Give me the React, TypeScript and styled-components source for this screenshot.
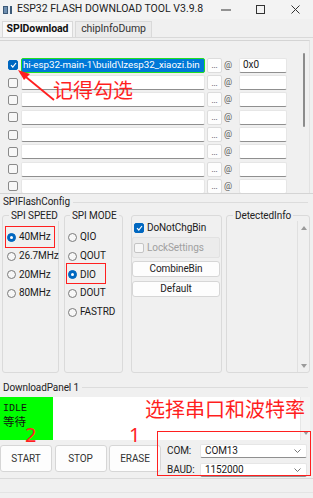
import React from 'react';
import styled, { createGlobalStyle } from 'styled-components';

const GlobalStyle = createGlobalStyle`
  html, body {
    margin: 0;
    padding: 0;
    background: #f0f0f0;
  }
  body {
    font-family: Roboto, 'Noto Sans CJK SC', sans-serif;
  }
  * {
    box-sizing: border-box;
  }
`;

const red = '#ff1f1f';

const Window = styled.div`
  position: relative;
  width: 313px;
  height: 498px;
  overflow: hidden;
  display: flex;
  flex-direction: column;
  background: #f0f0f0;
  color: #1a1a1a;
  font-size: 10px;
  letter-spacing: -0.1px;
  line-height: 1;
`;

// Title bar
//
const TitleBar = styled.div`
  height: 19px;
  flex-shrink: 0;
  display: flex;
  align-items: center;
  padding-left: 3px;
  background: #f3f3f3;
`;

const TitleText = styled.span`
  margin-left: 5px;
  font-size: 10.5px;
  color: #222;
  letter-spacing: 0;
`;

const WinControls = styled.div`
  margin-left: auto;
  display: flex;
  height: 100%;
`;

const WinButton = styled.div`
  width: 35px;
  display: flex;
  align-items: center;
  justify-content: center;
`;

// Tabs
//
const TabBar = styled.div`
  height: 19px;
  flex-shrink: 0;
  display: flex;
  align-items: flex-end;
  gap: 2px;
  padding-left: 2px;
  border-bottom: 1px solid #d9d9d9;
`;

const Tab = styled.div<{ $active?: boolean; $width: number }>`
  width: ${({ $width }) => $width}px;
  height: 16px;
  display: flex;
  align-items: center;
  justify-content: center;
  font-size: 10.5px;
  font-weight: ${({ $active }) => ($active ? 700 : 400)};
  background: ${({ $active }) => ($active ? '#f9f9f9' : '#ebebeb')};
  border: 1px solid #d9d9d9;
  border-bottom: none;
  color: ${({ $active }) => ($active ? '#111' : '#333')};
`;

// File list
//
const FilePanel = styled.div`
  margin-top: 2px;
  height: 153px;
  flex-shrink: 0;
  width: 310px;
  display: flex;
  border-top: 1px solid #d4d4d4;
  border-right: 1px solid #e2e2e2;
`;

const FileList = styled.div`
  flex: 1;
  display: flex;
  flex-direction: column;
  gap: 2.33px;
  padding: 16.7px 0 0 8px;
  overflow: hidden;
`;

const FileRow = styled.div`
  height: 15px;
  flex-shrink: 0;
  display: flex;
  align-items: center;
`;

const CheckBox = styled.span<{ $checked?: boolean; $disabled?: boolean }>`
  width: 10px;
  height: 10px;
  flex-shrink: 0;
  border-radius: 2px;
  display: flex;
  align-items: center;
  justify-content: center;
  background: ${({ $checked }) => ($checked ? '#0067c0' : '#f7f7f7')};
  border: 1px solid
    ${({ $checked, $disabled }) =>
      $checked ? '#0067c0' : $disabled ? '#c4c4c4' : '#8a8a8a'};
  margin-right: 3px;
`;

const TextBox = styled.div<{ $width: number }>`
  width: ${({ $width }) => $width}px;
  height: 15px;
  flex-shrink: 0;
  background: #fff;
  border: 1px solid #e6e6e6;
  border-bottom-color: #8f8f8f;
  border-radius: 2px;
  display: flex;
  align-items: center;
  padding-left: 3px;
  overflow: hidden;
  white-space: nowrap;
`;

const SelectedPath = styled(TextBox)`
  border: 1.5px solid #22e022;
  border-bottom-color: #22e022;
  background: #0078d7;
  color: #fff;
  padding-left: 1px;
  font-size: 9.8px;
  letter-spacing: -0.05px;
`;

const DotsButton = styled.div`
  width: 15px;
  height: 15px;
  margin-left: 2px;
  flex-shrink: 0;
  background: #fdfdfd;
  border: 1px solid #dcdcdc;
  border-radius: 2px;
  font-size: 8px;
  display: flex;
  align-items: center;
  justify-content: center;
  padding-top: 2px;
  color: #333;
`;

const AtSign = styled.span`
  width: 15px;
  margin-left: 2px;
  flex-shrink: 0;
  font-size: 9px;
  color: #555;
`;

const ScrollTrack = styled.div`
  width: 8px;
  padding: 12px 0 0 2px;
`;

const ScrollThumb = styled.div`
  width: 2px;
  height: 74px;
  border-radius: 1px;
  background: #8c8c8c;
`;

// Flash config
//
const ConfigSection = styled.div`
  height: 182px;
  flex-shrink: 0;
  display: flex;
  flex-direction: column;
  border-top: 1px solid #d4d4d4;
`;

const SectionHeader = styled.div<{ $height: number }>`
  height: ${({ $height }) => $height}px;
  flex-shrink: 0;
  display: flex;
  align-items: center;
  gap: 3px;
  padding: 0 5px 0 3px;
  color: #222;
`;

const HeaderLine = styled.div`
  flex: 1;
  height: 1px;
  background: #dcdcdc;
`;

const GroupsRow = styled.div`
  height: 163px;
  display: flex;
  padding-left: 2px;
`;

const Group = styled.fieldset<{ $width: number; $gap: number; $inset?: number }>`
  width: ${({ $width }) => $width}px;
  margin: 0 0 0 ${({ $gap }) => $gap}px;
  padding: 7px 0 0 ${({ $inset }) => $inset ?? 4}px;
  border: 1px solid #dadada;
  border-radius: 3px;
  min-width: 0;
  flex-shrink: 0;
  display: flex;
  flex-direction: column;
`;

const Legend = styled.legend`
  padding: 0 2px;
  margin-left: 2px;
  line-height: 11px;
  height: 11px;
  color: #222;
  white-space: nowrap;
`;

const PlainGroup = styled.div`
  width: 91px;
  margin: 5px 0 0 8px;
  height: 158px;
  border: 1px solid #dadada;
  border-radius: 3px;
  padding: 6px 1px 0 0;
  display: flex;
  flex-direction: column;
`;

const RadioItem = styled.div`
  height: 18.7px;
  display: flex;
  align-items: center;
  color: #1a1a1a;
`;

const RadioDot = styled.span<{ $checked?: boolean }>`
  width: 9px;
  height: 9px;
  border-radius: 50%;
  margin-right: 3px;
  flex-shrink: 0;
  display: flex;
  align-items: center;
  justify-content: center;
  background: ${({ $checked }) => ($checked ? '#0067c0' : '#f7f7f7')};
  border: 1px solid ${({ $checked }) => ($checked ? '#0067c0' : '#7a7a7a')};
  &::after {
    content: '';
    width: 3px;
    height: 3px;
    border-radius: 50%;
    background: ${({ $checked }) => ($checked ? '#fff' : 'transparent')};
  }
`;

const OptionRow = styled.div`
  height: 11px;
  display: flex;
  align-items: center;
  padding-left: 2px;
`;

const LockBox = styled.div`
  height: 21px;
  margin-top: 4px;
  display: flex;
  align-items: center;
  padding-left: 1px;
  background: #ececec;
  border: 1px solid #e2e2e2;
  border-radius: 2px;
  color: #a0a0a0;
`;

const PushButton = styled.div<{ $height?: number }>`
  height: ${({ $height }) => $height ?? 16}px;
  flex-shrink: 0;
  display: flex;
  align-items: center;
  justify-content: center;
  background: #fdfdfd;
  border: 1px solid #d6d6d6;
  border-radius: 3px;
  color: #222;
`;

const InfoBody = styled.div`
  flex: 1;
  display: flex;
  margin: -7px 0 0 -3px;
`;

const InfoText = styled.div`
  flex: 1;
`;

const InfoScroll = styled.div`
  width: 12px;
  border-left: 1px solid #e0e0e0;
  display: flex;
  flex-direction: column;
  justify-content: space-between;
  align-items: center;
  padding: 5px 0 4px;
`;

const Arrow = styled.span<{ $down?: boolean }>`
  width: 0;
  height: 0;
  border-left: 3px solid transparent;
  border-right: 3px solid transparent;
  ${({ $down }) =>
    $down ? 'border-top: 4px solid #9a9a9a;' : 'border-bottom: 4px solid #9a9a9a;'}
`;

// Download panel
//
const LogArea = styled.div`
  height: 43px;
  flex-shrink: 0;
  display: flex;
  margin-right: 3px;
`;

const StatusBlock = styled.div`
  width: 53px;
  background: #00ff00;
  padding: 6px 0 0 3px;
  font-family: 'Liberation Mono', 'Noto Sans CJK SC', monospace;
  font-size: 10px;
  letter-spacing: 0;
  line-height: 12px;
  color: #111;
`;

const CjkLine = styled.div`
  font-family: 'Noto Sans CJK SC', sans-serif;
  font-size: 11.5px;
`;

const LogText = styled.div`
  flex: 1;
  background: #fff;
`;

const LogScroll = styled.div`
  width: 10px;
  background: #f4f4f4;
  border-left: 1px solid #e6e6e6;
  display: flex;
  flex-direction: column;
  justify-content: flex-end;
  align-items: center;
  padding-bottom: 5px;
`;

const Controls = styled.div`
  height: 38px;
  flex-shrink: 0;
  display: flex;
  padding-top: 4px;
`;

const ActionButtons = styled.div`
  display: flex;
  gap: 2.5px;
  padding-top: 1px;
`;

const ActionButton = styled(PushButton)`
  width: 52px;
  height: 27px;
  color: #333;
`;

const PortPanel = styled.div`
  margin-left: 6px;
  display: grid;
  grid-template-columns: 33px 107px;
  grid-auto-rows: 14px;
  row-gap: 5px;
  align-items: center;
`;

const PortLabel = styled.span`
  color: #222;
`;

const SelectBox = styled(TextBox)`
  justify-content: space-between;
  padding: 0 5px 0 4px;
  height: 14px;
  color: #1a1a1a;
`;

const StatusBar = styled.div`
  flex: 1;
  border-top: 1px solid #dadada;
  border-bottom: 1px solid #e4e4e4;
  margin-bottom: 5px;
`;

// Annotations
//
const Note = styled.span<{ $x: number; $y: number; $latin?: boolean }>`
  position: absolute;
  left: ${({ $x }) => $x}px;
  top: ${({ $y }) => $y}px;
  color: ${red};
  font-family: ${({ $latin }) =>
    $latin ? "'Noto Sans', sans-serif" : "'Noto Sans CJK SC', sans-serif"};
  font-size: 20px;
  letter-spacing: 0;
  line-height: 1;
  white-space: nowrap;
`;

const Mark = styled.div<{ $x: number; $y: number; $w: number; $h: number }>`
  position: absolute;
  left: ${({ $x }) => $x}px;
  top: ${({ $y }) => $y}px;
  width: ${({ $w }) => $w}px;
  height: ${({ $h }) => $h}px;
  border: 1.5px solid ${red};
`;

const ArrowSvg = styled.svg`
  position: absolute;
  left: 0;
  top: 0;
  pointer-events: none;
`;

const Tick = () => (
  <svg width="7" height="6" viewBox="0 0 7 6">
    <path d="M1 3.2 L2.8 5 L6 1" fill="none" stroke="#fff" strokeWidth="1.2" />
  </svg>
);

const Chevron = () => (
  <svg width="7" height="4" viewBox="0 0 7 4">
    <path d="M0.5 0.5 L3.5 3.5 L6.5 0.5" fill="none" stroke="#666" strokeWidth="0.9" />
  </svg>
);

const speeds = ['40MHz', '26.7MHz', '20MHz', '80MHz'];
const modes = ['QIO', 'QOUT', 'DIO', 'DOUT', 'FASTRD'];

export default function App() {
  return (
    <>
      <GlobalStyle />
      <Window>
        <TitleBar>
          <svg width="9" height="8" viewBox="0 0 9 8">
            <rect width="9" height="8" fill="#3d5a78" />
            <rect x="5" y="0" width="2" height="8" fill="#e8eef4" />
            <rect x="1" y="1" width="3" height="6" fill="#6f8fb0" />
          </svg>
          <TitleText>ESP32 FLASH DOWNLOAD TOOL V3.9.8</TitleText>
          <WinControls>
            <WinButton>
              <svg width="10" height="2" viewBox="0 0 10 2">
                <rect y="0.5" width="10" height="1" fill="#333" />
              </svg>
            </WinButton>
            <WinButton>
              <svg width="9" height="9" viewBox="0 0 9 9">
                <rect x="0.5" y="0.5" width="8" height="8" fill="none" stroke="#333" />
              </svg>
            </WinButton>
            <WinButton>
              <svg width="9" height="9" viewBox="0 0 9 9">
                <path d="M0.5 0.5 L8.5 8.5 M8.5 0.5 L0.5 8.5" stroke="#333" strokeWidth="1" />
              </svg>
            </WinButton>
          </WinControls>
        </TitleBar>

        <TabBar>
          <Tab $active $width={71}>SPIDownload</Tab>
          <Tab $width={77}>chipInfoDump</Tab>
        </TabBar>

        <FilePanel>
          <FileList>
            {Array.from({ length: 8 }).map((_, i) => (
              <FileRow key={i}>
                <CheckBox $checked={i === 0}>{i === 0 && <Tick />}</CheckBox>
                {i === 0 ? (
                  <SelectedPath $width={184}>
                    hi-esp32-main-1\build\lzesp32_xiaozi.bin
                  </SelectedPath>
                ) : (
                  <TextBox $width={184} />
                )}
                <DotsButton>...</DotsButton>
                <AtSign>@</AtSign>
                <TextBox $width={48}>{i === 0 ? '0x0' : ''}</TextBox>
              </FileRow>
            ))}
          </FileList>
          <ScrollTrack>
            <ScrollThumb />
          </ScrollTrack>
        </FilePanel>

        <ConfigSection>
          <SectionHeader $height={16}>
            SPIFlashConfig
            <HeaderLine />
          </SectionHeader>
          <GroupsRow>
            <Group $width={57} $gap={0}>
              <Legend>SPI SPEED</Legend>
              {speeds.map((s, i) => (
                <RadioItem key={s}>
                  <RadioDot $checked={i === 0} />
                  {s}
                </RadioItem>
              ))}
            </Group>
            <Group $width={59} $gap={5} $inset={3}>
              <Legend>SPI MODE</Legend>
              {modes.map((m) => (
                <RadioItem key={m}>
                  <RadioDot $checked={m === 'DIO'} />
                  {m}
                </RadioItem>
              ))}
            </Group>
            <PlainGroup>
              <OptionRow>
                <CheckBox $checked>
                  <Tick />
                </CheckBox>
                DoNotChgBin
              </OptionRow>
              <LockBox>
                <CheckBox $disabled />
                LockSettings
              </LockBox>
              <PushButton style={{ marginTop: 3 }}>CombineBin</PushButton>
              <PushButton style={{ marginTop: 4 }}>Default</PushButton>
            </PlainGroup>
            <Group $width={84} $gap={4}>
              <Legend>DetectedInfo</Legend>
              <InfoBody>
                <InfoText />
                <InfoScroll>
                  <Arrow />
                  <Arrow $down />
                </InfoScroll>
              </InfoBody>
            </Group>
          </GroupsRow>
        </ConfigSection>

        <SectionHeader $height={22} style={{ paddingTop: 3 }}>
          DownloadPanel 1
          <HeaderLine />
        </SectionHeader>

        <LogArea>
          <StatusBlock>
            IDLE
            <CjkLine>等待</CjkLine>
          </StatusBlock>
          <LogText />
          <LogScroll>
            <Arrow $down />
          </LogScroll>
        </LogArea>

        <Controls>
          <ActionButtons>
            <ActionButton>START</ActionButton>
            <ActionButton>STOP</ActionButton>
            <ActionButton>ERASE</ActionButton>
          </ActionButtons>
          <PortPanel>
            <PortLabel>COM:</PortLabel>
            <SelectBox $width={107}>
              COM13
              <Chevron />
            </SelectBox>
            <PortLabel>BAUD:</PortLabel>
            <SelectBox $width={107}>
              1152000
              <Chevron />
            </SelectBox>
          </PortPanel>
        </Controls>

        <StatusBar />

        <ArrowSvg width="313" height="498" viewBox="0 0 313 498">
          <path d="M54 100 L21 73" stroke={red} strokeWidth="1.8" />
          <path d="M18 70 L30 74 L24 80 Z" fill={red} />
        </ArrowSvg>
        <Note $x={53} $y={80}>记得勾选</Note>
        <Mark $x={5} $y={226} $w={50} $h={22} />
        <Mark $x={66} $y={263} $w={40} $h={21} />
        <Note $x={145} $y={399}>选择串口和波特率</Note>
        <Note $x={25} $y={425} $latin>2</Note>
        <Note $x={129} $y={425} $latin>1</Note>
        <Mark $x={157} $y={431} $w={154} $h={45} />
      </Window>
    </>
  );
}
